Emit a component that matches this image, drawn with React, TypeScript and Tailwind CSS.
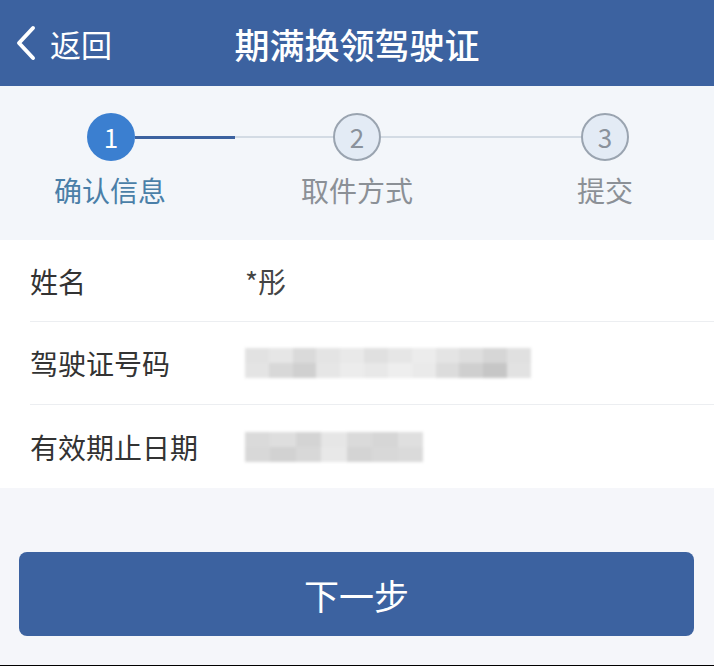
import React from 'react';

const font = { fontFamily: '"Noto Sans CJK SC", "Noto Sans", sans-serif' };

const rows = [
  { label: '姓名', value: '*彤' },
  { label: '驾驶证号码', blur: 'id' },
  { label: '有效期止日期', blur: 'date' },
];

const BlurBlock: React.FC<{ kind: string }> = ({ kind }) => {
  // masked value, drawn as pixelated grey blocks (two rows)
  const top =
    kind === 'id'
      ? ['#e2e2e2', '#e6e6e6', '#dadada', '#e4e4e4', '#e9e9e9', '#e0e0e0', '#e6e6e6', '#ececec', '#e4e4e4', '#dedede', '#d6d6d6', '#e0e0e0']
      : ['#dadada', '#dedede', '#d4d4d4', '#e6e6e6', '#dadada', '#d6d6d6', '#dfdfdf'];
  const bottom =
    kind === 'id'
      ? ['#e4e4e4', '#d8d8d8', '#d0d0d0', '#e6e6e6', '#ececec', '#e8e8e8', '#eeeeee', '#eaeaea', '#dcdcdc', '#cfcfcf', '#c6c6c6', '#e2e2e2']
      : ['#d8d8d8', '#d2d2d2', '#d8d8d8', '#e8e8e8', '#d4d4d4', '#d8d8d8', '#dadada'];
  const w = kind === 'id' ? 'w-[286px]' : 'w-[178px]';
  return (
    <div className={`flex flex-col h-[30px] ${w} blur-[1.5px]`}>
      {[top, bottom].map((row, j) => (
        <div key={j} className="flex flex-1">
          {row.map((c, i) => (
            <div key={i} className="flex-1 h-full" style={{ backgroundColor: c }} />
          ))}
        </div>
      ))}
    </div>
  );
};

export default function App() {
  return (
    <div className="w-[714px] h-[666px] bg-[#f5f6fa] flex flex-col border-b border-black overflow-hidden" style={font}>
      {/* header */}
      <div className="h-[86px] bg-[#3c62a0] flex items-center relative shrink-0">
        <div className="flex items-center pl-[15px] gap-[13px] text-white">
          <svg width="22" height="36" viewBox="0 0 22 36" fill="none">
            <polyline points="18,3 4,18 18,33" stroke="white" strokeWidth="4" strokeLinecap="round" strokeLinejoin="round" />
          </svg>
          <span className="text-[31px] leading-none">返回</span>
        </div>
        <div className="absolute inset-0 flex items-center justify-center text-white text-[35px] font-medium leading-none pointer-events-none">
          期满换领驾驶证
        </div>
      </div>

      {/* steps */}
      <div className="h-[154px] bg-[#f3f6fa] shrink-0 pt-[27px]">
        <div className="flex items-center pl-[87px]">
          <div className="w-[48px] h-[48px] rounded-full bg-[#3b7fd0] text-white text-[26px] flex items-center justify-center leading-none">1</div>
          <div className="flex w-[198px] items-center">
            <div className="w-[100px] h-[3px] bg-[#3c62a0]" />
            <div className="flex-1 h-[2px] bg-[#d3dbe4]" />
          </div>
          <div className="w-[48px] h-[48px] rounded-full bg-[#e3ebf5] border-2 border-[#9aa4b0] text-[#8a929c] text-[26px] flex items-center justify-center leading-none">2</div>
          <div className="w-[200px] h-[2px] bg-[#d3dbe4]" />
          <div className="w-[48px] h-[48px] rounded-full bg-[#e3ebf5] border-2 border-[#9aa4b0] text-[#8a929c] text-[26px] flex items-center justify-center leading-none">3</div>
        </div>
        <div className="flex mt-[12px] text-[28px] leading-[34px]">
          <div className="w-[140px] ml-[40px] text-center text-[#4a7fa8]">确认信息</div>
          <div className="w-[140px] ml-[107px] text-center text-[#8b9096]">取件方式</div>
          <div className="w-[140px] ml-[108px] text-center text-[#8b9096]">提交</div>
        </div>
      </div>

      {/* form */}
      <div className="bg-white pl-[30px] shrink-0">
        {rows.map((r, i) => (
          <div
            key={i}
            className={`flex items-center ${i === 0 ? 'h-[82px]' : 'h-[83px]'} ${i < rows.length - 1 ? 'border-b border-[#eceef1]' : ''}`}
          >
            <div className="w-[215px] text-[28px] text-[#333] leading-none">{r.label}</div>
            {r.value ? (
              <div className="text-[28px] text-[#444] leading-none">{r.value}</div>
            ) : (
              <BlurBlock kind={r.blur!} />
            )}
          </div>
        ))}
      </div>

      {/* button */}
      <div className="flex-1 px-[19px] pt-[64px]">
        <button className="w-[675px] h-[84px] rounded-[8px] bg-[#3c62a0] text-white text-[35px] flex items-center justify-center leading-none">
          下一步
        </button>
      </div>
    </div>
  );
}
